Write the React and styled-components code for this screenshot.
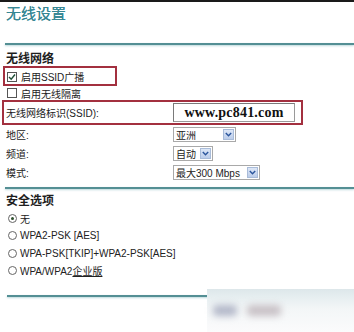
import React from 'react';
import styled, { createGlobalStyle } from 'styled-components';

const Global = createGlobalStyle`
  html, body { margin: 0; padding: 0; background: #fff; }
  body {
    font-family: "Liberation Sans", Arial, "Noto Sans CJK SC", sans-serif;
    font-size: 10px;
    color: #222;
  }
`;

const Page = styled.div`
  position: relative;
  width: 354px;
  height: 332px;
  overflow: hidden;
  background: #fff;
`;

const TopRule = styled.div`
  height: 2px;
  background: #1a1a1a;
`;

const Title = styled.h1`
  margin: 0 0 0 6px;
  font-family: "Noto Sans CJK SC", sans-serif;
  font-size: 15px;
  line-height: 22px;
  font-weight: normal;
  color: #378794;
  text-shadow: 0 0 0.6px #378794;
`;

const Divider = styled.div`
  margin: ${(p) => p.$mt}px 0 0 ${(p) => p.$ml}px;
  height: 2px;
  background: #548f94;
  box-shadow: 0 1px 2px rgba(120, 180, 185, 0.5);
`;

const Heading = styled.h2`
  margin: ${(p) => p.$mt}px 0 0 6px;
  font-family: "Noto Sans CJK SC", sans-serif;
  font-size: 12px;
  line-height: 14px;
  font-weight: bold;
  color: #1e1e1e;
`;

const Highlight = styled.div`
  box-sizing: border-box;
  margin: ${(p) => p.$mt}px 0 0 ${(p) => p.$ml}px;
  width: ${(p) => p.$w}px;
  height: ${(p) => p.$h}px;
  border: 2px solid #a3303f;
`;

const CheckRow = styled.label`
  display: flex;
  align-items: center;
  gap: 4px;
  height: ${(p) => p.$h}px;
  padding: ${(p) => p.$pt || 0}px 0 0 ${(p) => p.$pl}px;
  box-sizing: border-box;
  font-size: 10px;
  color: #222;
`;

const Box = styled.span`
  box-sizing: border-box;
  width: 10px;
  height: 10px;
  border: 1px solid #555;
  background: #fff;
  display: inline-flex;
  align-items: center;
  justify-content: center;
  flex: none;
`;

const FieldRow = styled.div`
  display: grid;
  grid-template-columns: 167px auto;
  align-items: center;
  height: ${(p) => p.$h}px;
  padding-left: ${(p) => p.$pl}px;
  box-sizing: border-box;
`;

const Label = styled.span`
  font-size: 10px;
  color: #222;
`;

const TextInput = styled.div`
  box-sizing: border-box;
  width: 122px;
  height: 19px;
  border: 1px solid #9a9a9a;
  border-top-color: #7a7a7a;
  border-left-color: #7a7a7a;
  background: #fff;
  display: flex;
  align-items: center;
  justify-content: center;
  font-family: "Liberation Serif", "Times New Roman", serif;
  font-weight: bold;
  font-size: 14px;
  color: #111;
  letter-spacing: 0.2px;
`;

const Select = styled.div`
  box-sizing: border-box;
  width: ${(p) => p.$w}px;
  height: 15px;
  border: 1px solid #a9a9a9;
  background: #fff;
  display: flex;
  align-items: center;
  justify-content: space-between;
  padding: 0 1px 0 2px;
  font-size: 10px;
  color: #222;
`;

const Arrow = styled.span`
  box-sizing: border-box;
  width: 11px;
  height: 11px;
  border: 1px solid #a9bcd9;
  background: linear-gradient(#dde7f7, #bccdea);
  display: inline-flex;
  align-items: center;
  justify-content: center;
`;

const RadioList = styled.div`
  display: flex;
  flex-direction: column;
  margin-top: 2.5px;
`;

const RadioRow = styled.label`
  display: flex;
  align-items: center;
  gap: 3px;
  height: 17.5px;
  padding-left: 8px;
  font-size: 10px;
  color: #222;
`;

const Circle = styled.span`
  box-sizing: border-box;
  width: 9px;
  height: 9px;
  border-radius: 50%;
  border: 1px solid #666;
  background: #fff;
  display: inline-flex;
  align-items: center;
  justify-content: center;
  flex: none;
  &::after {
    content: "";
    width: 3px;
    height: 3px;
    border-radius: 50%;
    background: ${(p) => (p.$on ? '#2d4f2d' : 'transparent')};
  }
`;

const Link = styled.span`
  text-decoration: underline;
`;

const Watermark = styled.div`
  position: absolute;
  left: 207px;
  top: 289px;
  width: 147px;
  height: 43px;
  background: linear-gradient(#dde7ea 0, #e6eef0 8px, #f3f6f7 20px, #fbfbfc 43px);
`;

const Smudge = styled.span`
  position: absolute;
  left: ${(p) => p.$x}px;
  top: ${(p) => p.$y}px;
  width: ${(p) => p.$w}px;
  height: ${(p) => p.$h}px;
  border-radius: 4px;
  background: ${(p) => p.$c};
  filter: blur(3.5px);
`;

const Check = ({ on }) => (
  <Box>
    {on && (
      <svg width="8" height="8" viewBox="0 0 8 8">
        <path d="M1 4 L3.2 6.3 L7 1.5" fill="none" stroke="#1f4f37" strokeWidth="1.4" />
      </svg>
    )}
  </Box>
);

const Dropdown = ({ w, children }) => (
  <Select $w={w}>
    <span>{children}</span>
    <Arrow>
      <svg width="7" height="5" viewBox="0 0 7 5">
        <path d="M0.8 1 L3.5 3.8 L6.2 1" fill="none" stroke="#2b559c" strokeWidth="1.4" />
      </svg>
    </Arrow>
  </Select>
);

export default function App() {
  return (
    <>
      <Global />
      <Page>
        <TopRule />
        <Title>无线设置</Title>
        <Divider $mt={19} $ml={5} />
        <Heading $mt={6}>无线网络</Heading>
        <Highlight $mt={1} $ml={3} $w={114} $h={20}>
          <CheckRow $h={16} $pl={2} $pt={1}>
            <Check on />
            <span>启用SSID广播</span>
          </CheckRow>
        </Highlight>
        <CheckRow $h={14} $pl={7}>
          <Check />
          <span>启用无线隔离</span>
        </CheckRow>
        <Highlight $mt={0} $ml={2} $w={301} $h={25}>
          <FieldRow $h={21} $pl={2}>
            <Label>无线网络标识(SSID):</Label>
            <TextInput>www.pc841.com</TextInput>
          </FieldRow>
        </Highlight>
        <FieldRow $h={19} $pl={6}>
          <Label>地区:</Label>
          <Dropdown w={63}>亚洲</Dropdown>
        </FieldRow>
        <FieldRow $h={19} $pl={6}>
          <Label>频道:</Label>
          <Dropdown w={40}>自动</Dropdown>
        </FieldRow>
        <FieldRow $h={19} $pl={6}>
          <Label>模式:</Label>
          <Dropdown w={87}>最大300 Mbps</Dropdown>
        </FieldRow>
        <Divider $mt={5} $ml={5} />
        <Heading $mt={4}>安全选项</Heading>
        <RadioList>
          <RadioRow><Circle $on /><span>无</span></RadioRow>
          <RadioRow><Circle /><span>WPA2-PSK [AES]</span></RadioRow>
          <RadioRow><Circle /><span>WPA-PSK[TKIP]+WPA2-PSK[AES]</span></RadioRow>
          <RadioRow><Circle /><span>WPA/WPA2<Link>企业版</Link></span></RadioRow>
        </RadioList>
        <Divider $mt={15} $ml={7} />
        <Watermark>
          <Smudge $x={6} $y={16} $w={24} $h={11} $c="#b3b8c9" />
          <Smudge $x={40} $y={16} $w={34} $h={11} $c="#c8c1c6" />
        </Watermark>
      </Page>
    </>
  );
}
